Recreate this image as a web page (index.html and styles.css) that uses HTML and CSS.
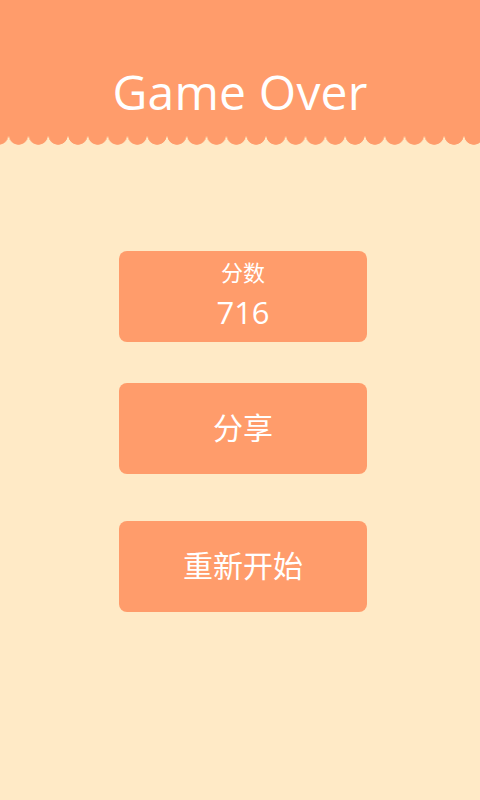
FILE: index.html
```html
<!DOCTYPE html>
<html lang="zh">
<head>
<meta charset="utf-8">
<link rel="stylesheet" href="styles.css">
</head>
<body>
<header class="top">
  <h1 class="title">Game Over</h1>
</header>
<div class="scallops"></div>
<main class="cards">
  <div class="card score">
    <div class="score-label">分数</div>
    <div class="score-value">716</div>
  </div>
  <div class="card share">分享</div>
  <div class="card restart">重新开始</div>
</main>
</body>
</html>
```

FILE: styles.css
```css
html, body {
  margin: 0;
  padding: 0;
  height: 100%;
}
body {
  background: #ffeac6;
  font-family: "Open Sans", "Noto Sans CJK SC", sans-serif;
  color: #fff;
}
.top {
  height: 136px;
  background: #ff9c6b;
  display: flex;
  align-items: center;
  justify-content: center;
}
.title {
  margin: 0;
  padding-top: 48px;
  font-family: "Open Sans", sans-serif;
  font-weight: 400;
  font-size: 48px;
  line-height: 1;
  color: #fff;
  letter-spacing: 0.2px;
}
.scallops {
  height: 12px;
  margin-top: -2px;
  background-image: radial-gradient(circle at 9.9px 1px, #ff9c6b 9.4px, rgba(255,156,107,0) 10px);
  background-size: 19.8px 12px;
  background-position: 8.6px 0;
  background-repeat: repeat-x;
}
.cards {
  display: flex;
  flex-direction: column;
  margin-left: 119px;
  width: 248px;
  padding-top: 105px;
}
.card {
  height: 91px;
  box-sizing: border-box;
  padding-bottom: 5px;
  background: #ff9c6b;
  border-radius: 8px;
  display: flex;
  flex-direction: column;
  align-items: center;
  justify-content: center;
  font-family: "Noto Sans CJK SC", sans-serif;
  font-size: 30px;
  color: #fff;
}
.score {
  justify-content: flex-start;
  padding-bottom: 0;
}
.score-label {
  font-size: 22px;
  line-height: 1;
  margin-top: 9px;
}
.score-value {
  font-family: "Open Sans", sans-serif;
  font-size: 31px;
  line-height: 1;
  margin-top: 15px;
}
.share {
  margin-top: 41px;
}
.restart {
  margin-top: 47px;
}
```
